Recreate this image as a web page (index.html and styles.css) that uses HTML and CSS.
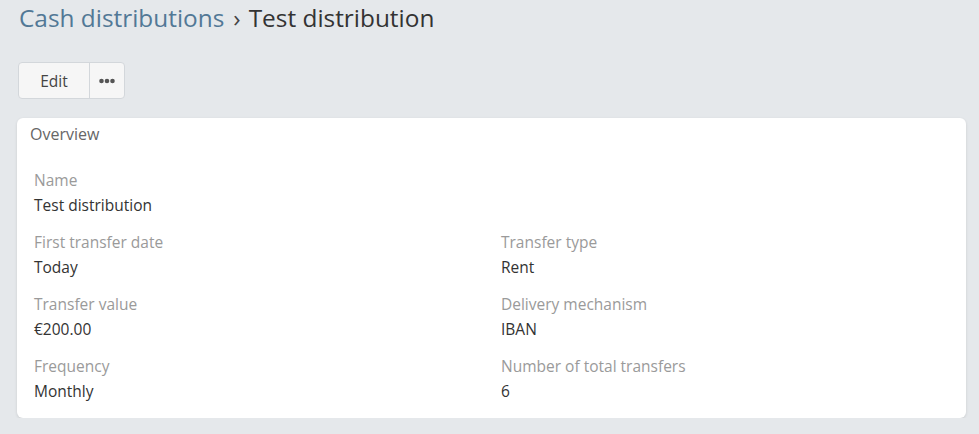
FILE: index.html
```html
<!DOCTYPE html>
<html lang="en">
<head>
<meta charset="utf-8">
<title>Test distribution</title>
<link rel="stylesheet" href="styles.css">
</head>
<body>
<div class="page">
  <h1 class="title"><a class="crumb" href="#">Cash distributions</a><span class="sep">›</span><span class="current">Test distribution</span></h1>
  <div class="actions">
    <div class="btn-group">
      <button class="btn btn-edit" type="button">Edit</button>
      <button class="btn btn-more" type="button" aria-label="More">
        <svg width="16" height="6" viewBox="0 0 16 6"><circle cx="2.5" cy="3" r="2.3"/><circle cx="8" cy="3" r="2.3"/><circle cx="13.5" cy="3" r="2.3"/></svg>
      </button>
    </div>
  </div>
  <section class="card">
    <div class="card-title">Overview</div>
    <div class="fields">
      <div class="field full">
        <div class="label">Name</div>
        <div class="value">Test distribution</div>
      </div>
      <div class="field">
        <div class="label">First transfer date</div>
        <div class="value">Today</div>
      </div>
      <div class="field">
        <div class="label">Transfer type</div>
        <div class="value">Rent</div>
      </div>
      <div class="field">
        <div class="label">Transfer value</div>
        <div class="value">€200.00</div>
      </div>
      <div class="field">
        <div class="label">Delivery mechanism</div>
        <div class="value">IBAN</div>
      </div>
      <div class="field">
        <div class="label">Frequency</div>
        <div class="value">Monthly</div>
      </div>
      <div class="field">
        <div class="label">Number of total transfers</div>
        <div class="value">6</div>
      </div>
    </div>
  </section>
</div>
</body>
</html>
```
FILE: styles.css
```css
html, body {
  margin: 0;
  padding: 0;
  background: #e5e8eb;
  font-family: "Open Sans", "Liberation Sans", sans-serif;
  color: #333;
}

.page {
  padding: 2px 13px 0 17px;
}

.title {
  margin: 0;
  padding-left: 2px;
  font-size: 24.4px;
  line-height: 32px;
  font-weight: 400;
  color: #333;
}

.crumb {
  color: #527896;
  text-decoration: none;
}

.sep {
  margin: 0 8px 0 9px;
  color: #444;
}

.actions {
  margin-top: 28px;
  display: flex;
}

.btn-group {
  display: flex;
  margin-left: 1px;
  border: 1px solid #d3d7db;
  border-radius: 4px;
  background: #f6f6f6;
  overflow: hidden;
}

.btn {
  font-family: inherit;
  font-size: 15.5px;
  color: #444;
  background: transparent;
  border: 0;
  height: 35px;
  padding: 0;
  margin: 0;
  display: flex;
  align-items: center;
  justify-content: center;
}

.btn-edit {
  width: 70px;
}

.btn-more {
  width: 35px;
  border-left: 1px solid #d3d7db;
}

.btn-more svg {
  fill: #555;
}

.card {
  margin-top: 19px;
  background: #fff;
  border-radius: 6px;
  box-shadow: 0 1px 3px rgba(0, 0, 0, 0.12);
  padding: 5px 17px 16px 17px;
}

.card-title {
  margin-left: -4px;
  font-size: 16px;
  line-height: 22px;
  color: #666;
}

.fields {
  margin-top: 24px;
  display: grid;
  grid-template-columns: 1fr 1fr;
  column-gap: 19px;
  row-gap: 15px;
}

.field.full {
  grid-column: 1 / -1;
}

.label {
  font-size: 15.5px;
  line-height: 22px;
  color: #9a9a9a;
}

.value {
  margin-top: 3px;
  font-size: 15.5px;
  line-height: 22px;
  color: #333;
}
```
